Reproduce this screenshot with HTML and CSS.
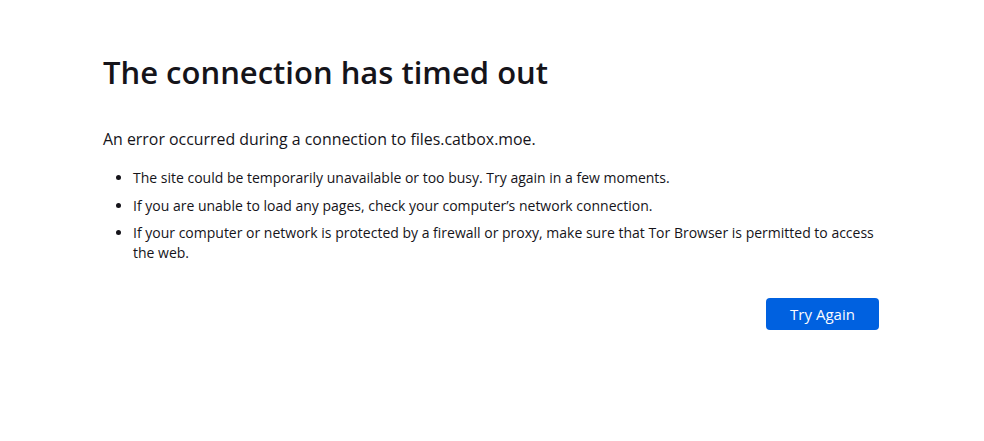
FILE: index.html
```html
<!DOCTYPE html>
<html lang="en">
<head>
<meta charset="utf-8">
<title>Problem loading page</title>
<link rel="stylesheet" href="styles.css">
</head>
<body>
<main class="container">
  <h1 class="title">The connection has timed out</h1>
  <p class="intro">An error occurred during a connection to files.catbox.moe.</p>
  <ul class="reasons">
    <li>The site could be temporarily unavailable or too busy. Try again in a few moments.</li>
    <li>If you are unable to load any pages, check your computer’s network connection.</li>
    <li>If your computer or network is protected by a firewall or proxy, make sure that Tor Browser is permitted to access the web.</li>
  </ul>
  <div class="actions">
    <button class="primary">Try Again</button>
  </div>
</main>
</body>
</html>
```
FILE: styles.css
```css
html, body {
  margin: 0;
  padding: 0;
  background: #ffffff;
}
body {
  font-family: "Open Sans", "Noto Sans", sans-serif;
  color: #15141a;
}
.container {
  width: 776px;
  margin-left: 103px;
  padding-top: 50px;
  display: flex;
  flex-direction: column;
}
.title {
  font-size: 31px;
  font-weight: 600;
  line-height: 44px;
  margin: 0;
}
.intro {
  font-size: 15.9px;
  line-height: 24px;
  margin: 33px 0 0 0;
}
.reasons {
  margin: 17px 0 0 0;
  padding-left: 30px;
  font-size: 14px;
  line-height: 20px;
}
.reasons li {
  margin-bottom: 7.5px;
}
.actions {
  display: flex;
  justify-content: flex-end;
  margin-top: 27px;
}
.primary {
  width: 113px;
  height: 32px;
  border: none;
  border-radius: 4px;
  background: #0061e0;
  color: #fbfbfe;
  font-family: inherit;
  font-size: 15px;
  font-weight: 500;
  padding: 0;
}
```
